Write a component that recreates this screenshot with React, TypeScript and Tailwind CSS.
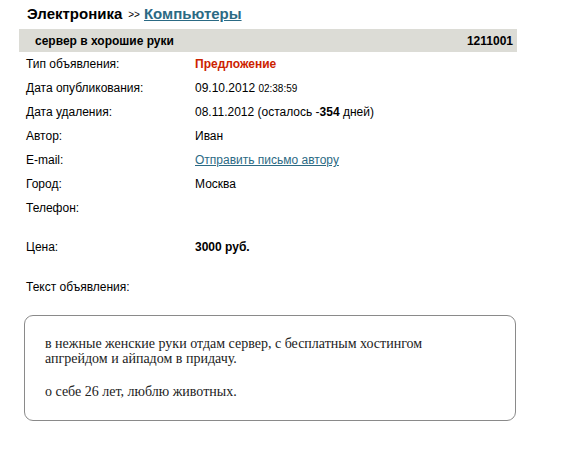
import React from "react";

const rows: { label: string; value: React.ReactNode }[] = [
  { label: "Тип объявления:", value: <span className="font-bold text-[#cc2200]">Предложение</span> },
  {
    label: "Дата опубликования:",
    value: (
      <span>
        09.10.2012 <span className="text-[10px]">02:38:59</span>
      </span>
    ),
  },
  {
    label: "Дата удаления:",
    value: (
      <span>
        08.11.2012 (осталось -<b>354</b> дней)
      </span>
    ),
  },
  { label: "Автор:", value: "Иван" },
  {
    label: "E-mail:",
    value: <a className="underline text-[#2b6a84]" href="#">Отправить письмо автору</a>,
  },
  { label: "Город:", value: "Москва" },
  { label: "Телефон:", value: "" },
];

export default function App() {
  return (
    <div className="w-[570px] h-[453px] bg-white text-black text-[12px] font-['Liberation_Sans',Arial,sans-serif]">
      <div className="pl-[27px] pt-[5px] h-[29px] flex items-start">
        <span className="font-bold text-[15px] leading-[18px]">Электроника</span>
        <span className="text-[10px] leading-[18px] ml-[6px] mr-[4px] relative top-[1px]">&gt;&gt;</span>
        <a href="#" className="font-bold text-[15px] leading-[18px] underline text-[#2b6a84]">Компьютеры</a>
      </div>
      <div className="ml-[19px] w-[498px] h-[23px] bg-[#dcdcd6] flex items-center justify-between pl-[16px] pr-[4px] font-bold">
        <span>сервер в хорошие руки</span>
        <span>1211001</span>
      </div>
      <div className="pl-[26px]">
        {rows.map((r) => (
          <div key={r.label} className="h-[24px] flex items-center">
            <div className="w-[169px]">{r.label}</div>
            <div>{r.value}</div>
          </div>
        ))}
        <div className="h-[15px]" />
        <div className="h-[24px] flex items-center">
          <div className="w-[169px]">Цена:</div>
          <div className="font-bold">3000 руб.</div>
        </div>
        <div className="h-[16px]" />
        <div className="h-[24px] flex items-center">
          <div>Текст объявления:</div>
        </div>
      </div>
      <div className="mt-[16px] ml-[24px] w-[492px] h-[106px] border border-[#8a8a8a] rounded-[9px] pl-[20px] pt-[20px] font-['Liberation_Serif','Times_New_Roman',serif] text-[14px] leading-[15px] text-[#222]">
        <p>
          в нежные женские руки отдам сервер, с бесплатным хостингом
          <br />
          апгрейдом и айпадом в придачу.
        </p>
        <p className="mt-[18px]">о себе 26 лет, люблю животных.</p>
      </div>
    </div>
  );
}
